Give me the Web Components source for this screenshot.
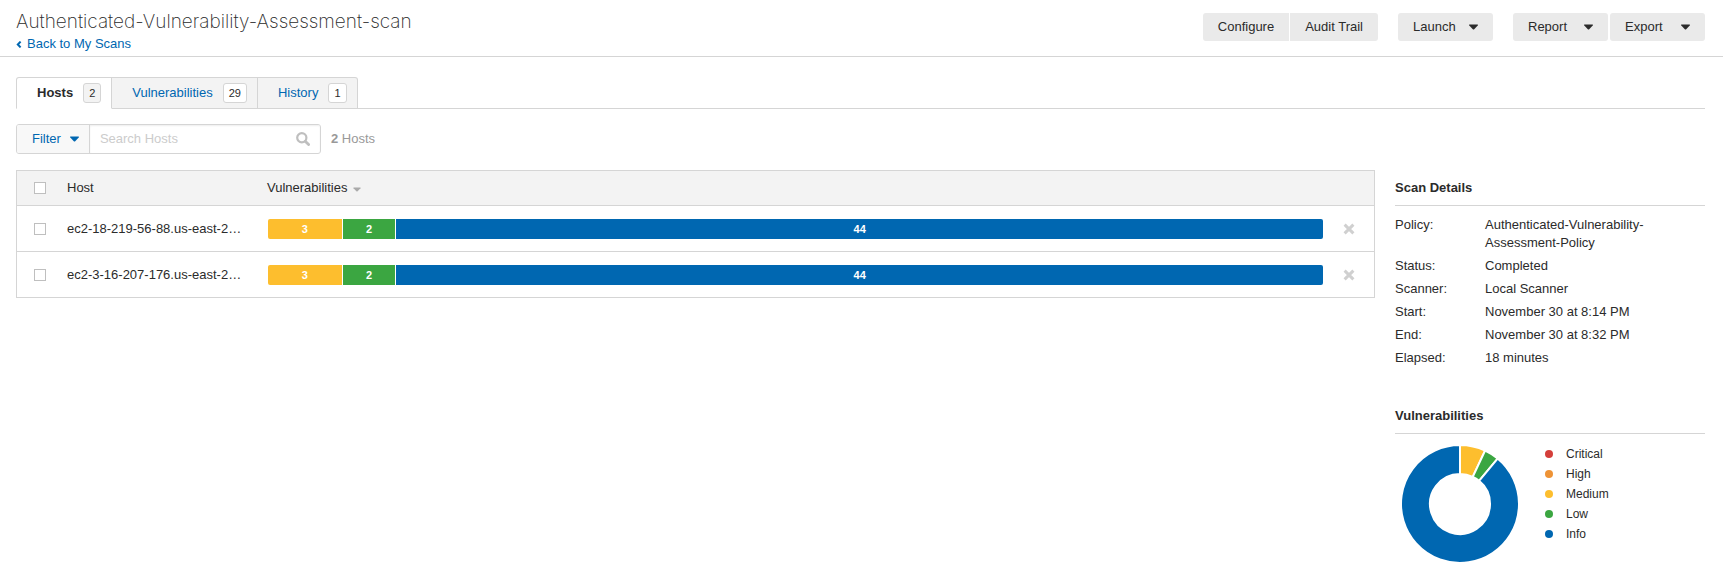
<!DOCTYPE html>
<html lang="en">
<head>
<meta charset="utf-8">
<meta name="viewport" content="width=device-width, initial-scale=1">
<title>Authenticated-Vulnerability-Assessment-scan</title>
<style>
  body {
    margin: 0;
    background: #fff;
    color: #2b2b2b;
    font: 13px/18px "Liberation Sans", Arial, sans-serif;
    --line: #d5d5d5;
    --link: #0067b1;
    --critical: #d43f3a;
    --high: #ee9336;
    --medium: #fdbe2e;
    --low: #3ba641;
    --info: #0067b1;
  }
</style>
</head>
<body>
<scan-page></scan-page>

<script>
const define = (name, html, setup) => {
  const template = document.createElement('template');
  template.innerHTML = '<style>*{box-sizing:border-box}</style>' + html;
  customElements.define(name, class extends HTMLElement {
    constructor() {
      super();
      this.attachShadow({ mode: 'open' }).append(template.content.cloneNode(true));
    }
    connectedCallback() {
      if (setup) setup(this, this.shadowRoot);
    }
  });
};

define('caret-icon', `
  <style>
    :host { display: inline-flex; width: 9px; height: 6px; }
    svg { width: 100%; height: 100%; fill: currentColor; }
  </style>
  <svg viewBox="0 0 9 6" aria-hidden="true"><path d="M.6.5h7.8c.5 0 .6.5.3.9L5.2 5.2c-.4.4-1 .4-1.4 0L.3 1.4C0 1 .1.5.6.5z"/></svg>
`);

define('action-button', `
  <style>
    :host { display: block; }
    button { display: flex; align-items: center; justify-content: space-between; width: 100%; height: 28px; margin: 0; padding: 0 15px; border: 0; border-radius: 3px; background: #eaeaea; color: inherit; font: inherit; }
    :host([menu]) { width: 95px; }
    caret-icon { display: none; }
    :host([menu]) caret-icon { display: inline-flex; }
    :host([joined=start]) button { border-radius: 3px 0 0 3px; }
    :host([joined=end]) button { border-radius: 0 3px 3px 0; }
  </style>
  <button type="button"><slot></slot><caret-icon></caret-icon></button>
`);

define('scan-header', `
  <style>
    :host { display: flex; justify-content: space-between; align-items: flex-start; padding: 9px 18px 3px 16px; border-bottom: 1px solid var(--line); }
    h1 { margin: 0; font: 200 19px/26px Inter, "Liberation Sans", sans-serif; }
    a { display: flex; align-items: center; gap: 5px; color: var(--link); text-decoration: none; }
    svg { width: 6px; height: 7px; fill: none; stroke: currentColor; stroke-width: 2; }
    nav { display: flex; gap: 20px; padding-top: 4px; }
    .pair { display: flex; gap: 1px; }
    .menus { display: flex; gap: 2px; }
  </style>
  <div>
    <h1>Authenticated-Vulnerability-Assessment-scan</h1>
    <a href="#scans"><svg viewBox="0 0 6 7" aria-hidden="true"><path d="M4.6.6L1.8 3.5l2.8 2.9"/></svg>Back to My Scans</a>
  </div>
  <nav>
    <div class="pair"><action-button joined="start">Configure</action-button><action-button joined="end">Audit Trail</action-button></div>
    <action-button menu>Launch</action-button>
    <div class="menus"><action-button menu>Report</action-button><action-button menu>Export</action-button></div>
  </nav>
`);

define('scan-tab', `
  <style>
    :host { display: block; border: 1px solid var(--line); border-left-width: 0; background: #f3f3f3; }
    :host(:first-child) { border-left-width: 1px; border-top-left-radius: 3px; }
    :host(:last-child) { border-top-right-radius: 3px; }
    :host([active]) { background: #fff; border-bottom-color: #fff; font-weight: bold; }
    a { display: flex; align-items: center; gap: 10px; height: 30px; padding: 0 10px 0 20px; color: var(--link); text-decoration: none; }
    :host([active]) a { color: inherit; }
    .count { padding: 0 5px; border: 1px solid var(--line); border-radius: 3px; background: #fff; color: #2b2b2b; font-size: 11px; font-weight: normal; }
    :host([active]) .count { background: #f3f3f3; }
  </style>
  <a href="#tab"><slot></slot><span class="count"></span></a>
`, (host, root) => { root.querySelector('.count').textContent = host.getAttribute('count'); });

define('scan-tabs', `
  <style>
    :host { display: flex; border-bottom: 1px solid var(--line); }
    nav { display: flex; margin-bottom: -1px; }
  </style>
  <nav><slot></slot></nav>
`);

define('host-filter', `
  <style>
    :host { display: flex; align-items: center; gap: 10px; color: #999; }
    .box { display: flex; width: 305px; height: 30px; border: 1px solid var(--line); border-radius: 3px; overflow: hidden; }
    button { display: flex; align-items: center; gap: 9px; padding: 0 10px 0 15px; border: 0; border-right: 1px solid var(--line); background: #f8f8f8; color: var(--link); font: inherit; }
    label { display: flex; flex: 1; align-items: center; padding: 0 10px; box-shadow: inset 0 1px 2px #eee; }
    input { flex: 1; min-width: 0; padding: 0; border: 0; outline: 0; background: none; color: #2b2b2b; font: inherit; }
    input::placeholder { color: #ccc; opacity: 1; }
    svg { width: 14px; height: 14px; fill: none; stroke: #bfbfbf; }
  </style>
  <div class="box">
    <button type="button">Filter <caret-icon></caret-icon></button>
    <label><input type="text" placeholder="Search Hosts" aria-label="Search Hosts">
      <svg viewBox="0 0 14 14" aria-hidden="true"><circle cx="5.8" cy="5.8" r="4.6" stroke-width="2.2"/><path d="M9.2 9.2l3.4 3.4" stroke-width="2.8" stroke-linecap="round"/></svg>
    </label>
  </div>
  <span><b>2</b> Hosts</span>
`);

define('severity-bar', `
  <style>
    :host { display: flex; gap: 1px; height: 20px; border-radius: 2px; overflow: hidden; color: #fff; font: bold 11px/20px "Liberation Sans", Arial, sans-serif; text-align: center; }
    span { flex: 1 1 0; }
    .medium { flex-grow: 7; background: var(--medium); }
    .low { flex-grow: 5; background: var(--low); }
    .info { flex-grow: 88; background: var(--info); }
  </style>
  <span class="medium"></span><span class="low"></span><span class="info"></span>
`, (host, root) => {
  for (const level of ['medium', 'low', 'info']) root.querySelector('.' + level).textContent = host.getAttribute(level);
});

define('host-table', `
  <style>
    :host { display: block; }
    table { width: 100%; table-layout: fixed; border: 1px solid var(--line); border-bottom: 0; border-spacing: 0; }
    th, td { padding: 0; border-bottom: 1px solid var(--line); text-align: left; font-weight: normal; vertical-align: middle; white-space: nowrap; }
    th { height: 35px; background: #f3f3f3; }
    td { height: 46px; }
    .check { width: 50px; padding-left: 17px; }
    .host { width: 200px; }
    .bar { padding-left: 1px; }
    .remove { width: 51px; padding-left: 20px; }
    input { display: block; appearance: none; width: 12px; height: 12px; margin: 0; border: 1px solid #bfbfbf; background: #fff; }
    caret-icon { width: 8px; height: 5px; margin: 0 0 1px 6px; color: #aaa; }
    button { display: flex; padding: 0; border: 0; background: none; }
    svg { width: 12px; height: 12px; stroke: #d0d0d0; stroke-width: 3; }
  </style>
  <table>
    <thead><tr>
      <th class="check"><input type="checkbox" aria-label="Select all hosts"></th>
      <th class="host">Host</th><th>Vulnerabilities<caret-icon></caret-icon></th><th class="remove"></th>
    </tr></thead>
    <tbody></tbody>
  </table>
`, (host, root) => {
  root.querySelector('tbody').innerHTML = ['ec2-18-219-56-88.us-east-2…', 'ec2-3-16-207-176.us-east-2…'].map(name => `
    <tr>
      <td class="check"><input type="checkbox" aria-label="Select ${name}"></td>
      <td>${name}</td>
      <td class="bar"><severity-bar medium="3" low="2" info="44"></severity-bar></td>
      <td class="remove"><button type="button" aria-label="Remove"><svg viewBox="0 0 12 12"><path d="M1.6 1.6l8.8 8.8M10.4 1.6l-8.8 8.8"/></svg></button></td>
    </tr>`).join('');
});

define('side-panel', `
  <style>
    :host { display: block; }
    h2 { margin: 0; padding: 9px 0 8px; border-bottom: 1px solid var(--line); font-size: 13px; line-height: 18px; }
  </style>
  <h2></h2><slot></slot>
`, (host, root) => { root.querySelector('h2').textContent = host.getAttribute('heading'); });

define('scan-facts', `
  <style>
    :host { display: block; padding-top: 10px; }
    dl { display: grid; grid-template-columns: 90px 1fr; row-gap: 5px; margin: 0; }
    dd { margin: 0; max-width: 180px; }
  </style>
  <dl>
    <dt>Policy:</dt><dd>Authenticated-Vulnerability-Assessment-Policy</dd>
    <dt>Status:</dt><dd>Completed</dd>
    <dt>Scanner:</dt><dd>Local Scanner</dd>
    <dt>Start:</dt><dd>November 30 at 8:14 PM</dd>
    <dt>End:</dt><dd>November 30 at 8:32 PM</dd>
    <dt>Elapsed:</dt><dd>18 minutes</dd>
  </dl>
`);

define('severity-chart', `
  <style>
    :host { display: flex; align-items: flex-start; gap: 26px; padding: 10px 0 10px 6px; }
    svg { width: 118px; height: 120px; }
    ul { margin: 0; padding: 0; list-style: none; font-size: 12px; line-height: 20px; }
    li { display: flex; align-items: center; gap: 13px; }
    li::before { content: ""; width: 8px; height: 8px; border-radius: 50%; background: var(--dot); }
  </style>
  <svg viewBox="-59 -60 118 120" role="img" aria-label="Vulnerabilities by severity"></svg>
  <ul>
    <li style="--dot:var(--critical)">Critical</li>
    <li style="--dot:var(--high)">High</li>
    <li style="--dot:var(--medium)">Medium</li>
    <li style="--dot:var(--low)">Low</li>
    <li style="--dot:var(--info)">Info</li>
  </ul>
`, (host, root) => {
  const point = (r, share) => {
    const a = share * Math.PI * 2;
    return `${(r * Math.sin(a)).toFixed(2)} ${(-r * Math.cos(a)).toFixed(2)}`;
  };
  let from = 0;
  root.querySelector('svg').innerHTML = [['medium', .07], ['low', .04], ['info', .89]].map(([level, share]) => {
    const to = from + share, large = share > .5 ? 1 : 0;
    const d = `M${point(59, from)}A59 59 0 ${large} 1 ${point(59, to)}L${point(30, to)}A30 30 0 ${large} 0 ${point(30, from)}Z`;
    from = to;
    return `<path d="${d}" fill="var(--${level})" stroke="#fff" stroke-width="2"/>`;
  }).join('');
});

define('scan-page', `
  <style>
    :host { display: block; }
    main { padding: 20px 18px 0 16px; }
    host-filter { margin: 15px 0 16px; }
    .columns { display: grid; grid-template-columns: minmax(0, 1fr) 310px; gap: 20px; align-items: start; }
    aside { display: grid; gap: 31px; }
  </style>
  <scan-header></scan-header>
  <main>
    <scan-tabs>
      <scan-tab active count="2">Hosts</scan-tab>
      <scan-tab count="29">Vulnerabilities</scan-tab>
      <scan-tab count="1">History</scan-tab>
    </scan-tabs>
    <host-filter></host-filter>
    <div class="columns">
      <host-table></host-table>
      <aside>
        <side-panel heading="Scan Details"><scan-facts></scan-facts></side-panel>
        <side-panel heading="Vulnerabilities"><severity-chart></severity-chart></side-panel>
      </aside>
    </div>
  </main>
`);
</script>
</body>
</html>
